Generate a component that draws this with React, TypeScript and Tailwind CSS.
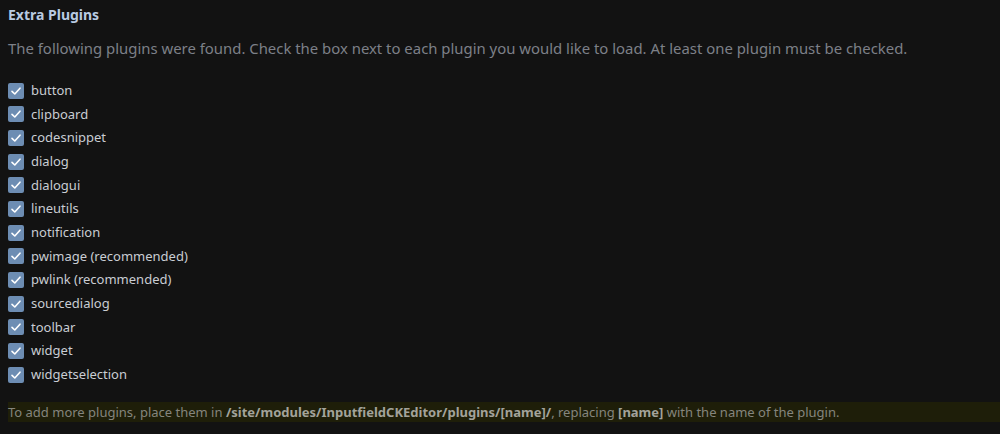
import React from "react";

const plugins = [
  "button",
  "clipboard",
  "codesnippet",
  "dialog",
  "dialogui",
  "lineutils",
  "notification",
  "pwimage (recommended)",
  "pwlink (recommended)",
  "sourcedialog",
  "toolbar",
  "widget",
  "widgetselection",
];

function Check() {
  return (
    <span className="flex h-[16px] w-[16px] shrink-0 items-center justify-center rounded-[2px] bg-[#6d8db3]">
      <svg width="12" height="12" viewBox="0 0 12 12" fill="none">
        <path d="M2 6.3 L4.8 9 L10 3.2" stroke="#ffffff" strokeWidth="1.6" strokeLinecap="round" strokeLinejoin="round" />
      </svg>
    </span>
  );
}

export default function App() {
  return (
    <div
      className="h-[434px] w-[1000px] overflow-hidden bg-[#121212] pl-[8px]"
      style={{ fontFamily: '"Noto Sans", "Open Sans", sans-serif' }}
    >
      <div className="pt-[5px] text-[14px] font-bold leading-[20px] text-[#b9cbe2]">Extra Plugins</div>
      <p className="mt-[13px] text-[14.9px] leading-[20px] text-[#7d8088]">
        The following plugins were found. Check the box next to each plugin you would like to load. At least one plugin must be checked.
      </p>
      <div className="mt-[21px] flex flex-col">
        {plugins.map((p) => (
          <label key={p} className="flex h-[23.67px] items-center gap-[7px] text-[13px] text-[#c9cdd3]">
            <Check />
            <span>{p}</span>
          </label>
        ))}
      </div>
      <div className="mt-[15px] h-[20px] bg-[#1e1e09] text-[13px] leading-[20px] text-[#85857d]">
        To add more plugins, place them in <b className="text-[#a3a39b]">/site/modules/InputfieldCKEditor/plugins/[name]/</b>, replacing <b className="text-[#a3a39b]">[name]</b> with the name of the plugin.
      </div>
    </div>
  );
}
